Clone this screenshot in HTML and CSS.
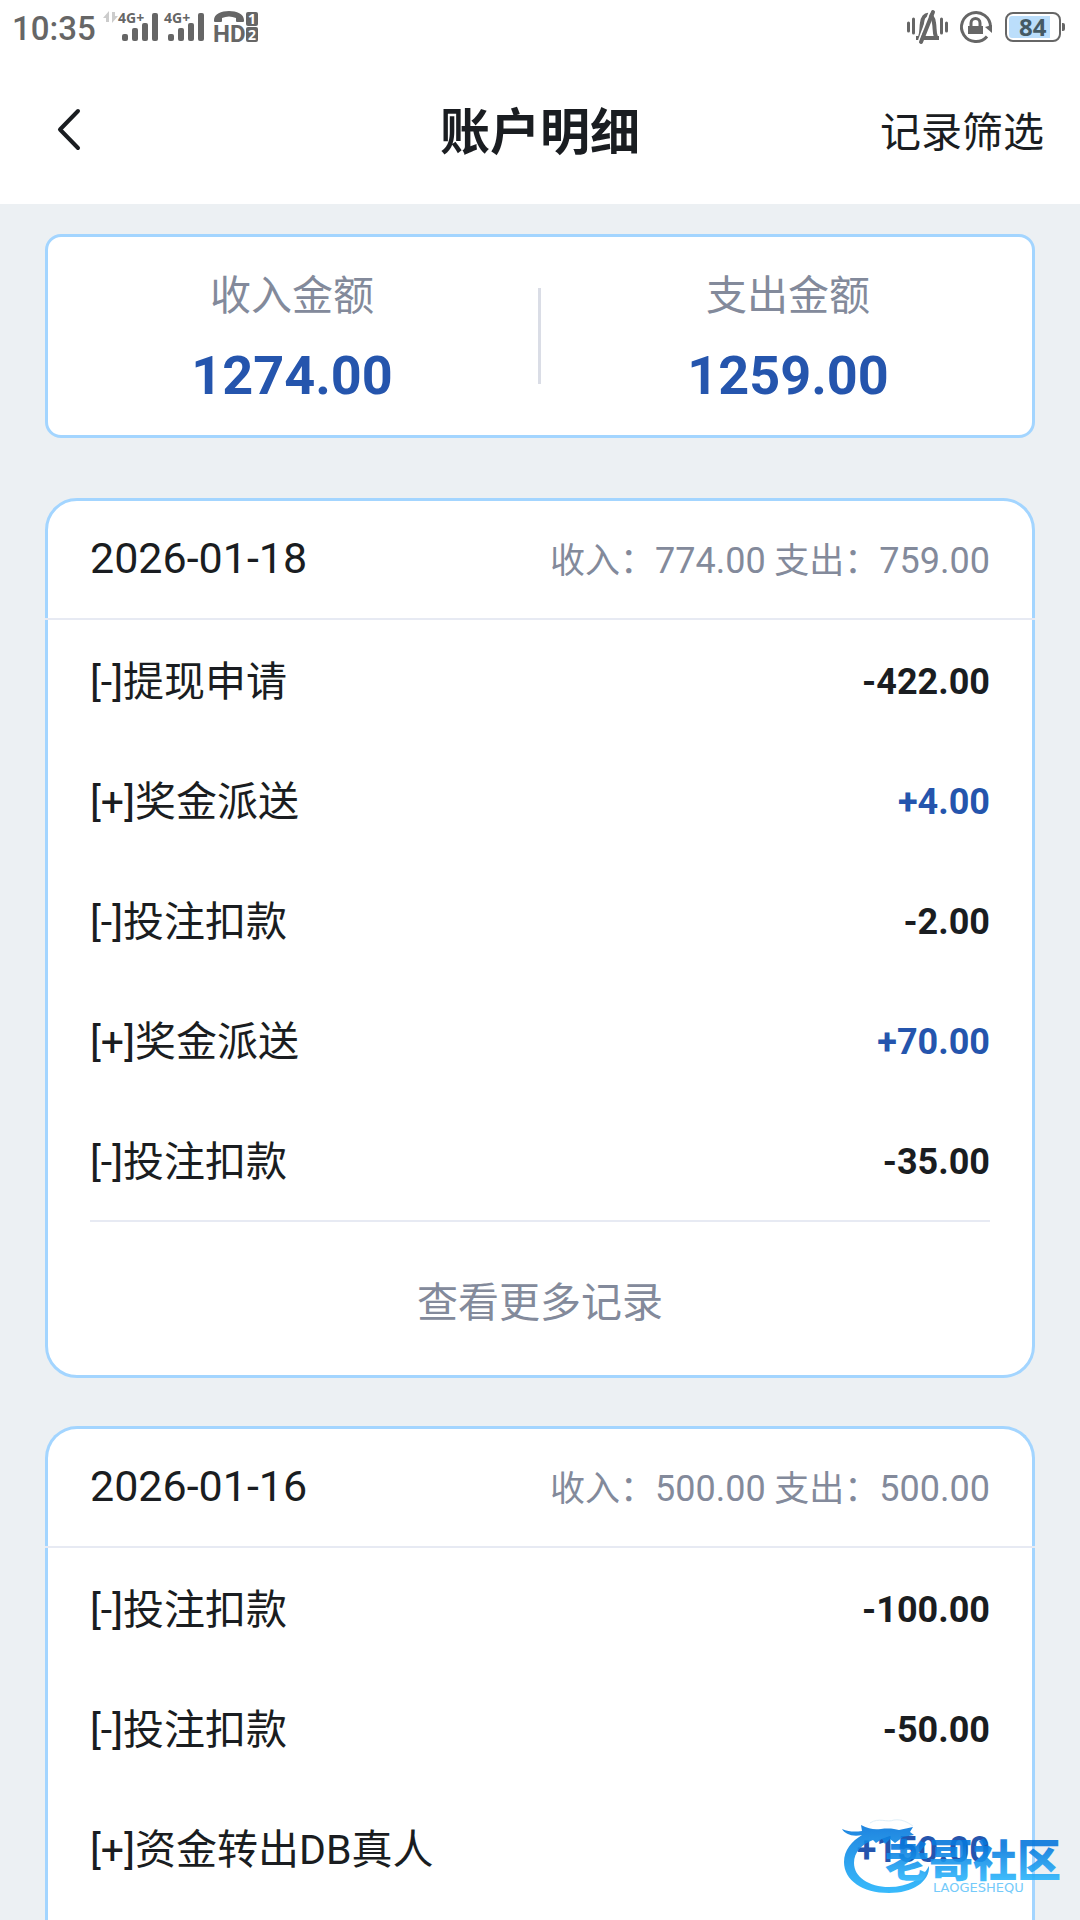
FILE: index.html
```html
<!DOCTYPE html>
<html lang="zh-CN">
<head>
<meta charset="utf-8">
<meta name="viewport" content="width=device-width, initial-scale=1">
<title>账户明细</title>
<link rel="stylesheet" href="styles.css">
</head>
<body>
<div class="app">
  <div class="status">
    <div class="status-group">
      <span class="clock">10:35</span>
      <svg class="status-icon" width="158" height="46" viewBox="103 4 158 46" aria-label="4G+ 4G+ HD">
        <g fill="#ccc">
          <path d="M103 18l6-7v11h-3v-4zM112 12h3v4h3l-6 7z"/>
        </g>
        <g class="signal-shape">
          <text class="net" x="118" y="23">4G+</text>
          <rect x="122" y="34" width="6" height="7" rx="2"/>
          <rect x="132" y="28" width="6" height="13" rx="2"/>
          <rect x="142" y="23" width="6" height="18" rx="2"/>
          <rect x="152" y="13" width="6" height="28" rx="2"/>
          <text class="net" x="164" y="23">4G+</text>
          <rect x="168" y="34" width="6" height="7" rx="2"/>
          <rect x="178" y="28" width="6" height="13" rx="2"/>
          <rect x="188" y="23" width="6" height="18" rx="2"/>
          <rect x="198" y="13" width="6" height="28" rx="2"/>
          <path d="M214 20c0-12 30-12 30 0v1q0 1-1 1h-6q-1 0-1-1v-3q-7-3-14 0v3q0 1-1 1h-6q-1 0-1-1z"/>
          <text class="hd" x="213" y="42">HD</text>
          <rect x="246" y="12" width="12" height="14" rx="2"/>
          <rect x="246" y="27" width="12" height="15" rx="2"/>
          <text class="sim" x="248" y="24">1</text>
          <text class="sim" x="248" y="40">2</text>
        </g>
      </svg>
    </div>
    <svg class="status-icon" width="160" height="36" viewBox="906 9 160 36" aria-label="84">
      <g fill="none" stroke="#666" stroke-width="3">
        <path d="M908.500 23v8M913.500 19v14M941.500 19v14M946.500 23v8" stroke-linecap="round"/>
        <path d="M916 38h23M920 37c2-5 1-9 2-14 1-11 11-11 12 0 1 5 0 9 2 14" stroke-width="4"/>
        <path d="M919 40L930 11" stroke="#fff" stroke-width="2"/>
        <path d="M921 42L933 12" stroke-width="4" stroke-linecap="round"/>
        <path d="M987 36.500A14.500 14.500 0 1 1 990.500 27"/>
        <path d="M971 27v-4c0-6 9-6 9 0v4"/>
        <rect x="1006" y="13" width="54" height="28" rx="7" stroke-width="2"/>
      </g>
      <path d="M985 27l7-2v8z" fill="#666"/>
      <path d="M968 26h15v8h-15zM1062 23h1q2 0 2 2v4q0 2-2 2h-1z" fill="#666"/>
      <path d="M1012 16h38v22h-38q-3 0-3-3v-16q0-3 3-3z" fill="#bbdefb"/>
      <text class="level" x="1019" y="36">84</text>
    </svg>
  </div>

  <header class="navbar">
    <button class="back" type="button" aria-label="返回">
      <svg width="28" height="44" viewBox="0 0 28 44"><path d="M22 4L4 22.500 22 41" fill="none" stroke="#1a1d21" stroke-width="4" stroke-linecap="round" stroke-linejoin="round"/></svg>
    </button>
    <h1 class="title">账户明细</h1>
    <a class="filter" href="#filter">记录筛选</a>
  </header>

  <main class="content">
    <section class="summary">
      <div class="total"><span class="total-label">收入金额</span><strong class="total-value">1274.00</strong></div>
      <div class="total"><span class="total-label">支出金额</span><strong class="total-value">1259.00</strong></div>
    </section>

    <section class="day">
      <div class="day-head"><h2 class="date">2026-01-18</h2><span class="day-sum">收入：<span class="num">774.00</span> 支出：<span class="num">759.00</span></span></div>
      <ul class="records">
        <li class="record"><span>[-]提现申请</span><b class="amount">-422.00</b></li>
        <li class="record"><span>[+]奖金派送</span><b class="amount income">+4.00</b></li>
        <li class="record"><span>[-]投注扣款</span><b class="amount">-2.00</b></li>
        <li class="record"><span>[+]奖金派送</span><b class="amount income">+70.00</b></li>
        <li class="record"><span>[-]投注扣款</span><b class="amount">-35.00</b></li>
      </ul>
      <button class="more" type="button">查看更多记录</button>
    </section>

    <section class="day day-open">
      <div class="day-head"><h2 class="date">2026-01-16</h2><span class="day-sum">收入：<span class="num">500.00</span> 支出：<span class="num">500.00</span></span></div>
      <ul class="records">
        <li class="record"><span>[-]投注扣款</span><b class="amount">-100.00</b></li>
        <li class="record"><span>[-]投注扣款</span><b class="amount">-50.00</b></li>
        <li class="record"><span>[+]资金转出DB真人</span><b class="amount income">+150.00</b></li>
      </ul>
    </section>
  </main>

  <svg class="watermark" width="224" height="80" viewBox="0 0 224 80" aria-label="老哥社区">
    <defs>
      <linearGradient id="ring" x1="0" y1="0" x2="0" y2="1"><stop offset="0" stop-color="#0878dc"/><stop offset="1" stop-color="#24b4fc"/></linearGradient>
      <linearGradient id="word" x1="0" y1="0" x2="0" y2="1"><stop offset=".3" stop-color="#0878dc"/><stop offset=".9" stop-color="#30bcff"/></linearGradient>
    </defs>
    <path fill="url(#ring)" d="M0 11c7 3 13 3 20 2l-1-6c8 4 13 5 20 4 8-1 14 0 18 1l14-3-3 5 4 3-11 2-8 6-5-4-5 5-3-5-6 4-3-3C20 26 12 34 12 45c0 14 15 24 35 24 19 0 33-8 40-21 1 16-17 27-40 27C20 75 2 62 2 44 2 32 10 23 20 17 10 19 3 16 0 11z"/>
    <path d="M28 5c9-6 17 0 24-3 8-1 13 2 19 6" fill="none" stroke="#dcedf8" stroke-width="1"/>
    <text class="brand" x="43" y="59" fill="url(#word)">老哥社区</text>
    <text class="brand-latin" x="91" y="74">LAOGESHEQU</text>
  </svg>
</div>
</body>
</html>
```
FILE: styles.css
```css
* { box-sizing: border-box; }

body {
  margin: 0;
  background: #ecf0f3;
  color: #1a1d21;
  font-family: Roboto, "Noto Sans CJK SC", sans-serif;
  font-size: 41px;
}

button {
  border: 0;
  background: none;
  padding: 0;
  color: inherit;
  font: inherit;
}

.app {
  position: relative;
  display: flex;
  flex-direction: column;
  min-height: 100vh;
}

.status {
  display: flex;
  justify-content: space-between;
  align-items: center;
  height: 54px;
  padding: 0 14px 0 12px;
  background: #fff;
}

.status-group { display: flex; align-items: center; gap: 7px; }
.status-icon { display: block; flex: none; }
.clock { padding-top: 4px; color: #666; font-size: 33px; font-weight: 500; line-height: 50px; }
.signal-shape { fill: #666; }
.net { font: 700 14px "Noto Sans", sans-serif; }
.hd { font: 700 24px "Liberation Sans Narrow", Roboto, sans-serif; }
.sim { fill: #fff; font: 700 14px "Noto Sans", sans-serif; }
.level { fill: #455a64; font: 700 24px "Noto Sans", sans-serif; }

.navbar {
  display: grid;
  grid-template-columns: 1fr auto 1fr;
  align-items: center;
  height: 150px;
  padding: 0 36px;
  background: #fff;
}

.back { justify-self: start; padding: 20px; }
.back svg { display: block; }
.title { margin: 0; padding-top: 8px; font-size: 50px; font-weight: 700; line-height: 142px; }
.filter { justify-self: end; color: inherit; text-decoration: none; }

.content {
  flex: 1;
  display: flex;
  flex-direction: column;
  padding: 30px 45px 0;
}

.summary {
  display: flex;
  gap: 8px;
  margin-bottom: 60px;
  padding: 27px 0;
  border: 3px solid #a3d5ff;
  border-radius: 16px;
  background: #fff;
}

.total {
  position: relative;
  flex: 1;
  display: flex;
  flex-direction: column;
  align-items: center;
}

.total + .total::before {
  content: "";
  position: absolute;
  left: -6px;
  top: 24px;
  bottom: 24px;
  width: 3px;
  background: #dadde6;
}

.total-label { color: #838a9b; line-height: 64px; }
.total-value { color: #2555ad; padding-top: 16px; font-size: 54px; line-height: 64px; }

.day {
  margin-bottom: 48px;
  padding: 0 42px;
  border: 3px solid #a3d5ff;
  border-radius: 32px;
  background: #fff;
}

.day-open {
  flex: 1;
  margin-bottom: 0;
  border-bottom: 0;
  border-radius: 32px 32px 0 0;
}

.day-head {
  display: flex;
  justify-content: space-between;
  align-items: center;
  height: 119px;
  margin: 0 -45px;
  padding: 0 45px 4px;
  border-bottom: 2px solid #e7eaf3;
}

.date { margin: 0; font-size: 43px; font-weight: 400; }
.day-sum { color: #838a9b; font-size: 35px; }
.num { font-size: 36px; }

.records { margin: 0; padding: 0; list-style: none; }
.record {
  display: flex;
  justify-content: space-between;
  padding-top: 4px;
  line-height: 116px;
}
.amount { font-size: 36px; }
.income { color: #2555ad; }

.more {
  display: block;
  width: 100%;
  padding-top: 9px;
  border-top: 2px solid #e7eaf3;
  color: #838a9b;
  line-height: 144px;
}

.watermark {
  position: absolute;
  right: 14px;
  bottom: 22px;
  opacity: 0.9;
  pointer-events: none;
}
.brand { font: 900 44px "Noto Sans CJK SC", sans-serif; }
.brand-latin { fill: #65c5fa; font: 13px "DejaVu Sans", sans-serif; }
```
